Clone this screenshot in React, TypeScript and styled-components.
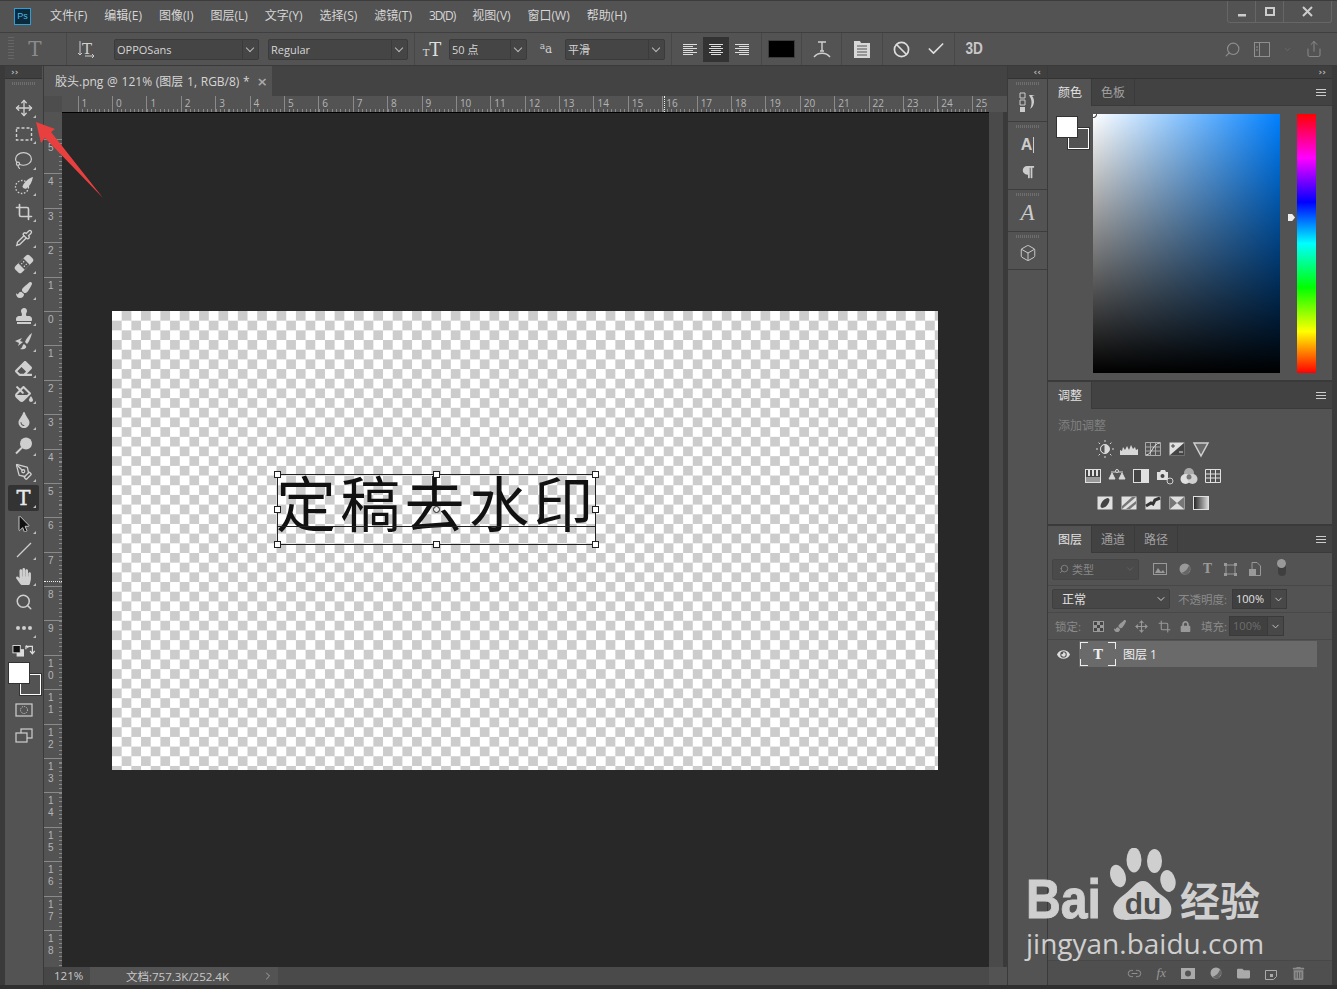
import React from "react";
import styled, { createGlobalStyle } from "styled-components";
import { Move, Lasso, Crop, Pipette, PenTool, Search, Box, Link2, Check, Ban, Share, ChevronDown, ChevronRight } from "lucide-react";
import { FaPaintBrush, FaStamp, FaEraser, FaFillDrip, FaTint, FaMousePointer, FaHandPaper, FaLock, FaEye, FaFolder, FaTrashAlt, FaParagraph } from "react-icons/fa";

const GlobalStyle = createGlobalStyle`
  html, body { margin: 0; padding: 0; background: #535353; overflow: hidden; }
  * { box-sizing: border-box; }
`;

const ICON = "#cfcfcf";
const MENU = ["文件(F)", "编辑(E)", "图像(I)", "图层(L)", "文字(Y)", "选择(S)", "滤镜(T)", "3D(D)", "视图(V)", "窗口(W)", "帮助(H)"];
const RULER_STEP = 34.4;
const TOP_LABELS = ["1", "0", ...Array.from({ length: 25 }, (_, i) => String(i + 1))];
const SIDE_LABELS = ["5", "4", "3", "2", "1", "0", "1", "2", "3", "4", "5", "6", "7", "8", "9", "10", "11", "12", "13", "14", "15", "16", "17", "18"];

const ToolGlyph = styled.span`
  font: 400 21px/1 "DejaVu Serif", serif;
  color: #e8e8e8;
  -webkit-text-stroke: 0.4px #e8e8e8;
`;

const Svg: React.FC<{ size?: number; children: React.ReactNode }> = ({ size = 20, children }) => (
  <svg width={size} height={size} viewBox="0 0 20 20" fill="none">{children}</svg>
);

const Marquee = () => <Svg><rect x="2.5" y="4" width="15" height="12" stroke={ICON} strokeWidth="1.4" strokeDasharray="3 2" /></Svg>;
const QuickSelect = () => (
  <Svg>
    <circle cx="8" cy="11" r="6.5" stroke={ICON} strokeWidth="1.3" strokeDasharray="1.6 1.6" />
    <path d="M19 1 C15 2 10 6 8.500 10.500 C9 12.500 11 13 12.500 12.500 C16 10 18 6 19 1Z" fill={ICON} />
  </Svg>
);
const Bandaid = () => (
  <Svg>
    <g transform="rotate(-45 10 10)">
      <rect x="0" y="5.500" width="20" height="9" rx="2.500" fill={ICON} />
      <rect x="6.500" y="5.500" width="7" height="9" fill="#535353" />
      <path d="M8 7.500h1.300v1.300H8zM10.700 7.500H12v1.300h-1.300zM8 11.200h1.300v1.300H8zM10.700 11.200H12v1.300h-1.300z" fill={ICON} />
    </g>
  </Svg>
);
const HistoryBrush = () => (
  <Svg>
    <path d="M18 1 C15 3 12 7 11 10 L13 12 C15 10 17 5 18 1Z" fill={ICON} />
    <path d="M10 12 C8 13 9 16 6 17 C10 18 13 16 12 14Z" fill={ICON} />
    <path d="M1 9 L8 6 L6 9 L9 10 L4 14 L5 11Z" fill={ICON} />
  </Svg>
);
const Dodge = () => (
  <Svg>
    <circle cx="12" cy="7.5" r="6" fill={ICON} />
    <path d="M8 11.5 L2 17.5" stroke={ICON} strokeWidth="2" />
  </Svg>
);
const LineTool = () => <Svg><path d="M3 17 L17 3" stroke={ICON} strokeWidth="1.2" /></Svg>;
const Dots = () => (
  <Svg>
    <circle cx="4" cy="10" r="2" fill={ICON} />
    <circle cx="10" cy="10" r="2" fill={ICON} />
    <circle cx="16" cy="10" r="2" fill={ICON} />
  </Svg>
);
const MaskMode = () => (
  <Svg>
    <rect x="2" y="4" width="16" height="12" stroke={ICON} strokeWidth="1.2" />
    <circle cx="10" cy="10" r="3.5" stroke={ICON} strokeWidth="1" strokeDasharray="1 1" />
  </Svg>
);
const ScreenMode = () => (
  <Svg>
    <rect x="7" y="3" width="11" height="9" stroke={ICON} strokeWidth="1.2" />
    <rect x="2" y="7" width="11" height="9" fill="#535353" stroke={ICON} strokeWidth="1.2" />
  </Svg>
);

const TOOLS: { key: string; icon: React.ReactNode; active?: boolean; flag?: boolean }[] = [
  { key: "move", icon: <Move size={18} color={ICON} strokeWidth={1.8} />, flag: true },
  { key: "marquee", icon: <Marquee />, flag: true },
  { key: "lasso", icon: <Lasso size={19} color={ICON} strokeWidth={1.5} />, flag: true },
  { key: "quick", icon: <QuickSelect />, flag: true },
  { key: "crop", icon: <Crop size={18} color={ICON} strokeWidth={2.2} />, flag: true },
  { key: "pipette", icon: <Pipette size={18} color={ICON} strokeWidth={1.8} />, flag: true },
  { key: "heal", icon: <Bandaid />, flag: true },
  { key: "brush", icon: <FaPaintBrush size={16} color={ICON} />, flag: true },
  { key: "stamp", icon: <FaStamp size={16} color={ICON} />, flag: true },
  { key: "history", icon: <HistoryBrush />, flag: true },
  { key: "eraser", icon: <FaEraser size={17} color={ICON} />, flag: true },
  { key: "fill", icon: <FaFillDrip size={18} color={ICON} />, flag: true },
  { key: "drop", icon: <FaTint size={16} color={ICON} />, flag: true },
  { key: "dodge", icon: <Dodge />, flag: true },
  { key: "pen", icon: <PenTool size={18} color={ICON} strokeWidth={1.7} />, flag: true },
  { key: "type", icon: <ToolGlyph>T</ToolGlyph>, flag: true, active: true },
  { key: "select", icon: <FaMousePointer size={16} color="#111" stroke={ICON} strokeWidth={30} />, flag: true },
  { key: "line", icon: <LineTool />, flag: true },
  { key: "hand", icon: <FaHandPaper size={17} color={ICON} />, flag: true },
  { key: "zoom", icon: <Search size={18} color={ICON} strokeWidth={2} /> },
  { key: "more", icon: <Dots />, flag: true },
];

const ALIGN_LINES = {
  left: [[0, 14], [0, 10], [0, 14], [0, 10], [0, 14], [0, 10]],
  center: [[0, 14], [2, 10], [0, 14], [2, 10], [0, 14], [2, 10]],
  right: [[0, 14], [4, 10], [0, 14], [4, 10], [0, 14], [4, 10]],
};

const AlignIcon: React.FC<{ kind: keyof typeof ALIGN_LINES }> = ({ kind }) => (
  <svg width="14" height="13" viewBox="0 0 14 13">
    {ALIGN_LINES[kind].map(([x, w], i) => (
      <rect key={i} x={x} y={i * 2 + 1} width={w} height="1" fill="#dedede" />
    ))}
  </svg>
);

const Adj: React.FC<{ children: React.ReactNode }> = ({ children }) => <svg width="18" height="18" viewBox="0 0 18 18">{children}</svg>;
const framed = (inner: React.ReactNode) => (
  <Adj>
    <rect x="1.5" y="2.5" width="15" height="13" fill="#e0e0e0" />
    {inner}
  </Adj>
);

const ADJUST_ROWS: React.ReactNode[][] = [
  [
    <Adj key="a"><circle cx="9" cy="9" r="4.5" fill="#d8d8d8" stroke="#d8d8d8" /><path d="M9 4.5 A4.5 4.5 0 0 0 9 13.5Z" fill="#535353" stroke="#d8d8d8" /><path d="M9 0v2M9 16v2M0 9h2M16 9h2M2.6 2.6l1.4 1.4M14 14l1.4 1.4M2.6 15.4L4 14M14 4l1.4-1.4" stroke="#d8d8d8" /></Adj>,
    <Adj key="b"><path d="M0 15 V10 L2 11 L3 7 L5 10 L7 6 L9 10 L11 5 L13 9 L15 7 L16 10 L18 9 V15Z" fill="#d8d8d8" /></Adj>,
    <Adj key="c"><path d="M1.5 2.5h15v13h-15zM6.5 2.5v13M11.5 2.5v13M1.5 7h15M1.5 11h15" fill="none" stroke="#aaa" /><path d="M2 15 C8 15 9 3 16 3" stroke="#e0e0e0" fill="none" /></Adj>,
    <Adj key="d"><rect x="1.5" y="2.5" width="15" height="13" fill="#e0e0e0" /><path d="M1.5 15.5 L16.5 2.5 V15.5Z" fill="#444" /><path d="M3 6h4M5 4v4" stroke="#444" /><path d="M11 12h4" stroke="#e0e0e0" /></Adj>,
    <Adj key="e"><path d="M2 3 H16 L9 16Z" fill="#6a6a6a" stroke="#d0d0d0" strokeWidth="1.5" /></Adj>,
  ],
  [
    <Adj key="a"><rect x="1.5" y="2.5" width="15" height="13" fill="#444" stroke="#e0e0e0" /><path d="M5 3v6M9 3v6M13 3v6" stroke="#e0e0e0" strokeWidth="2" /><rect x="2" y="10" width="14" height="5" fill="#999" /></Adj>,
    <Adj key="b"><path d="M9 2v3M3 5h12M1 12 L4 6 L7 12ZM11 12 L14 6 L17 12Z" fill="#d8d8d8" stroke="#d8d8d8" /><circle cx="9" cy="4" r="1.5" fill="#535353" stroke="#d8d8d8" /></Adj>,
    <Adj key="c"><rect x="1.5" y="2.5" width="15" height="13" fill="#e0e0e0" stroke="#e0e0e0" /><rect x="2" y="3" width="7" height="12" fill="#444" /></Adj>,
    <Adj key="d"><path d="M1 5h3l1-2h4l1 2h2v8H1Z" fill="#e0e0e0" /><circle cx="6.5" cy="9" r="2" fill="#444" /><circle cx="14" cy="14" r="3" fill="#535353" stroke="#d0d0d0" /></Adj>,
    <Adj key="e"><circle cx="9" cy="6" r="5" fill="#aaa" /><circle cx="5.5" cy="12" r="5" fill="#e0e0e0" /><circle cx="12.5" cy="12" r="5" fill="#d0d0d0" /><circle cx="9" cy="10" r="2.5" fill="#777" /></Adj>,
    <Adj key="f"><path d="M1.5 2.5h15v13h-15zM6.5 2.5v13M11.5 2.5v13M1.5 7h15M1.5 11h15" fill="none" stroke="#e0e0e0" /></Adj>,
  ],
  [
    framed(<ellipse cx="9" cy="9" rx="3" ry="6" fill="#444" transform="rotate(40 9 9)" />),
    framed(<path d="M2 12 L12 3 H16 L2 15ZM6 15 L16 7 V10 L10 15Z" fill="#777" />),
    framed(<path d="M2 12 L7 9 L9 10 L11 6 L16 4" fill="none" stroke="#333" strokeWidth="3" />),
    framed(<path d="M2 3 L9 9 L16 3 V15 L9 9 L2 15Z" fill="#777" />),
    <Adj key="g"><defs><linearGradient id="gm"><stop offset="0" stopColor="#222" /><stop offset="1" stopColor="#ddd" /></linearGradient></defs><rect x="1.5" y="2.5" width="15" height="13" fill="url(#gm)" stroke="#e0e0e0" /></Adj>,
  ],
];

const App: React.FC = () => (
  <Window>
    <GlobalStyle />
    <MenuBar>
      <PsLogo>Ps</PsLogo>
      <MenuList>
        {MENU.map((m) => <MenuItem key={m} $tight={m === "3D(D)"}>{m}</MenuItem>)}
      </MenuList>
      <WindowControls>
        <WinButton><svg width="10" height="10"><rect x="1" y="7" width="8" height="2.5" fill="#ccc" /></svg></WinButton>
        <WinButton><svg width="10" height="10"><rect x="1" y="1" width="8" height="7" fill="none" stroke="#ccc" strokeWidth="2" /></svg></WinButton>
        <WinButton $wide><svg width="11" height="11"><path d="M1 1 L10 10 M10 1 L1 10" stroke="#ccc" strokeWidth="2" /></svg></WinButton>
      </WindowControls>
    </MenuBar>

    <OptionsBar>
      <Grip />
      <Slot $w={48}><GhostT>T</GhostT></Slot>
      <Sep />
      <Slot $w={43}>
        <OrientLabel>T<svg width="18" height="18" viewBox="0 0 18 18"><path d="M3 1v14M1 13l2 2 2-2M8 16h9M15 14l2 2-2 2" stroke="#ccc" fill="none" /></svg></OrientLabel>
      </Slot>
      <Select $w={145} $ml={4}>OPPOSans</Select>
      <Select $w={140} $ml={9}>Regular</Select>
      <Sep $ml={6} />
      <Slot $w={34}><SizeGlyph><small>T</small>T</SizeGlyph></Slot>
      <Select $w={78}>50 点</Select>
      <Slot $w={38}><AaGlyph><sup>a</sup>a</AaGlyph></Slot>
      <Select $w={100}>平滑</Select>
      <Sep $ml={6} />
      <Slot $w={26} $ml={5}><AlignIcon kind="left" /></Slot>
      <Slot $w={26} $active><AlignIcon kind="center" /></Slot>
      <Slot $w={26}><AlignIcon kind="right" /></Slot>
      <Sep $ml={6} />
      <Swatch />
      <Sep />
      <Slot $w={39}>
        <svg width="18" height="20" viewBox="0 0 18 20"><path d="M5 3h8M9 3v9M7 12h4M1 18 C5 13 13 13 17 18" stroke="#d0d0d0" strokeWidth="1.4" fill="none" /></svg>
      </Slot>
      <Sep />
      <Slot $w={40}>
        <svg width="16" height="18" viewBox="0 0 16 18"><path d="M0 1h6l1 2h9v15H0Z" fill="#d8d8d8" /><path d="M3 6h10M3 9h10M3 12h10M3 15h10" stroke="#535353" /></svg>
      </Slot>
      <Sep />
      <Slot $w={37}><Ban size={17} color="#ddd" strokeWidth={2.4} /></Slot>
      <Slot $w={32}><Check size={20} color="#ddd" strokeWidth={2} /></Slot>
      <Sep $ml={2} />
      <Slot $w={39}><ThreeD>3D</ThreeD></Slot>
      <OptionsRight>
        <Search size={17} color="#8f8f8f" strokeWidth={1.6} style={{ transform: "scaleX(-1)" }} />
        <svg width="16" height="15" viewBox="0 0 16 15"><rect x=".5" y=".5" width="15" height="14" fill="none" stroke="#8f8f8f" /><path d="M5.5 1v13M2 5h2M2 8h2" stroke="#8f8f8f" /></svg>
        <ChevronDown size={9} color="#6f6f6f" />
        <Share size={18} color="#8f8f8f" strokeWidth={1.2} />
      </OptionsRight>
    </OptionsBar>

    <Workspace>
      <ToolColumn>
        <CollapseStrip $align="flex-start">››</CollapseStrip>
        <DockGrip />
        <ToolList>
          {TOOLS.map((t) => (
            <ToolButton key={t.key} $active={t.active} $flag={t.flag}>{t.icon}</ToolButton>
          ))}
        </ToolList>
        <MiniColors>
          <svg width="14" height="14" viewBox="0 0 14 14"><rect x="5" y="5" width="8" height="8" fill="#ddd" /><rect x="1" y="1" width="8" height="8" fill="#111" stroke="#ddd" /></svg>
          <svg width="12" height="14" viewBox="0 0 12 14"><path d="M1 5 V2 H8 V9M5.5 7l2.5 3 2.5-3M3.500 3.500L1 1" stroke="#ddd" fill="none" strokeWidth="1.3" /></svg>
        </MiniColors>
        <ColorChips $small />
        <BottomTool><MaskMode /></BottomTool>
        <BottomTool><ScreenMode /></BottomTool>
      </ToolColumn>

      <DocColumn>
        <TabStrip>
          <DocTab>胶头.png @ 121% (图层 1, RGB/8) *<TabClose>×</TabClose></DocTab>
        </TabStrip>
        <TopRulerRow>
          <RulerCorner />
          <TopRuler>
            {TOP_LABELS.map((l, i) => <TopTick key={i}>{l}</TopTick>)}
            <TopCursor />
          </TopRuler>
          <RulerGap />
        </TopRulerRow>
        <MiddleRow>
          <SideRuler>
            {SIDE_LABELS.map((l, i) => (
              <SideTick key={i}>{l.split("").map((d, j) => <span key={j}>{d}</span>)}</SideTick>
            ))}
            <SideCursor />
          </SideRuler>
          <Stage>
            <DocCanvas>
              <TextLayer>定稿去水印</TextLayer>
              <TransformBox>
                <Baseline />
                {["tl", "tc", "tr", "ml", "mr", "bl", "bc", "br"].map((h) => <Handle key={h} $pos={h} />)}
                <CenterMark />
              </TransformBox>
            </DocCanvas>
          </Stage>
          <VScroll />
        </MiddleRow>
        <StatusBar>
          <ZoomBox>121%</ZoomBox>
          <DocInfo>文档:757.3K/252.4K</DocInfo>
          <ChevronRight size={12} color="#bbb" strokeWidth={1.5} />
          <HScroll />
        </StatusBar>
      </DocColumn>

      <DockColumn>
        <CollapseStrip $align="flex-end">‹‹</CollapseStrip>
        <DockGroup $h={43}>
          <svg width="18" height="20" viewBox="0 0 18 20"><path d="M1 1h5v5H1zM1 8h5v5H1z" stroke="#ccc" fill="none" /><rect x="1" y="15" width="5" height="5" fill="#ccc" /><path d="M10 3h6l-3 1c3 3 3 10-2 13 2-4 2-9 0-12Z" fill="#ccc" /></svg>
        </DockGroup>
        <DockGroup $h={68}>
          <DockLetter>A<i /></DockLetter>
          <FaParagraph size={14} color="#ccc" />
        </DockGroup>
        <DockGroup $h={42}><ScriptA>A</ScriptA></DockGroup>
        <DockGroup $h={38}><Box size={18} color="#ccc" strokeWidth={1.3} /></DockGroup>
      </DockColumn>

      <PanelColumn>
        <CollapseStrip $align="flex-end">››</CollapseStrip>
        <Panel $h={301}>
          <PanelHeader>
            <PanelTab $active>颜色</PanelTab>
            <PanelTab>色板</PanelTab>
            <PanelMenu />
          </PanelHeader>
          <ColorBody>
            <ColorChips />
            <Picker><PickerDot /></Picker>
            <HueArrow />
            <HueBar />
          </ColorBody>
        </Panel>
        <Panel $h={142}>
          <PanelHeader>
            <PanelTab $active>调整</PanelTab>
            <PanelMenu />
          </PanelHeader>
          <AdjustBody>
            <AdjustTitle>添加调整</AdjustTitle>
            {ADJUST_ROWS.map((row, i) => (
              <AdjustRow key={i}>
                {row.map((icon, j) => <AdjustCell key={j}>{icon}</AdjustCell>)}
              </AdjustRow>
            ))}
          </AdjustBody>
        </Panel>
        <Panel $grow>
          <PanelHeader>
            <PanelTab $active>图层</PanelTab>
            <PanelTab>通道</PanelTab>
            <PanelTab>路径</PanelTab>
            <PanelMenu />
          </PanelHeader>
          <LayerRow $h={33}>
            <FilterSelect><Search size={10} color="#888" style={{ transform: "scaleX(-1)" }} />类型<ChevronDown size={10} color="#666" /></FilterSelect>
            <FilterIcons>
              <svg width="14" height="12" viewBox="0 0 14 12"><rect x=".5" y=".5" width="13" height="11" fill="none" stroke="#999" /><path d="M2 10 L5 5 L8 9 L10 7 L12 10Z" fill="#999" /></svg>
              <svg width="12" height="12" viewBox="0 0 12 12"><circle cx="6" cy="6" r="5.500" fill="#999" /><path d="M2 10 C6 9 9 6 10 2 L12 6 L8 12Z" fill="#666" /></svg>
              <FilterT>T</FilterT>
              <svg width="13" height="13" viewBox="0 0 13 13"><rect x="2" y="2" width="9" height="9" fill="none" stroke="#999" /><path d="M0 0h3v3H0zM10 0h3v3h-3zM0 10h3v3H0zM10 10h3v3h-3z" fill="#999" /></svg>
              <svg width="12" height="14" viewBox="0 0 12 14"><path d="M3 .5h5l3.500 3.500v9.500H3Z" fill="none" stroke="#999" /><rect x="0" y="7" width="7" height="7" fill="#999" /></svg>
              <FilterToggle><span /></FilterToggle>
            </FilterIcons>
          </LayerRow>
          <LayerRow $h={27}>
            <BlendSelect>正常<ChevronDown size={12} color="#ccc" /></BlendSelect>
            <DimLabel $ml={8}>不透明度:</DimLabel>
            <ValueBox $ml={5}>100%</ValueBox>
            <ArrowBox><ChevronDown size={11} color="#ccc" /></ArrowBox>
          </LayerRow>
          <LayerRow $h={27}>
            <DimLabel $ml={3}>锁定:</DimLabel>
            <LockIcons>
              <svg width="11" height="11" viewBox="0 0 11 11"><rect width="11" height="11" fill="#999" /><path d="M1 1h3v3H1zM7 1h3v3H7zM4 4h3v3H4zM1 7h3v3H1zM7 7h3v3H7z" fill="#444" /></svg>
              <FaPaintBrush size={12} color="#999" />
              <Move size={13} color="#999" />
              <Crop size={13} color="#999" />
              <FaLock size={11} color="#999" />
            </LockIcons>
            <DimLabel $ml={8}>填充:</DimLabel>
            <ValueBox $ml={2} $dim>100%</ValueBox>
            <ArrowBox><ChevronDown size={11} color="#ccc" /></ArrowBox>
          </LayerRow>
          <LayerList>
            <EyeCell><FaEye size={13} color="#ddd" /></EyeCell>
            <LayerItem>
              <LayerThumb>T</LayerThumb>
              <LayerName>图层 1</LayerName>
            </LayerItem>
          </LayerList>
          <PanelFooter>
            <Link2 size={15} color="#999" strokeWidth={1.4} />
            <FxLabel>fx</FxLabel>
            <svg width="14" height="11" viewBox="0 0 14 11"><rect width="14" height="11" fill="#aaa" /><circle cx="7" cy="5.500" r="3" fill="#555" /></svg>
            <svg width="12" height="12" viewBox="0 0 12 12"><circle cx="6" cy="6" r="5.500" fill="#aaa" /><path d="M2 10 C6 9 9 6 10 2 L12 6 L8 12Z" fill="#666" /></svg>
            <FaFolder size={13} color="#aaa" />
            <svg width="12" height="13" viewBox="0 0 12 13"><path d="M.5 3.500h8l3 3v6H.5Z" fill="none" stroke="#aaa" transform="matrix(1 0 0 -1 0 16)" /><rect x="5" y="7" width="3" height="3" fill="#aaa" /></svg>
            <FaTrashAlt size={13} color="#8a8a8a" />
          </PanelFooter>
        </Panel>
      </PanelColumn>
    </Workspace>
    <BottomEdge />

    <ArrowMark viewBox="0 0 80 90" width="80" height="90">
      <polygon points="1,2 20,9 16,12 68,78 10,18 6,23" fill="#e8403f" />
    </ArrowMark>

    <Watermark>
      <BaiText>Bai</BaiText>
      <PawMark viewBox="0 0 66 76" width="66" height="76">
        <ellipse cx="24" cy="12" rx="7.500" ry="12.500" fill="#cfcfcf" />
        <ellipse cx="44.500" cy="13" rx="7.500" ry="12" fill="#cfcfcf" />
        <ellipse cx="8" cy="28" rx="7.500" ry="11.500" fill="#cfcfcf" transform="rotate(-18 8 28)" />
        <ellipse cx="58" cy="33" rx="7.500" ry="11" fill="#cfcfcf" transform="rotate(-12 58 33)" />
        <path d="M33 33 C40 33 43 41 50 46 C58 51 63 57 61 65 C59 74 46 71 33 71 C20 71 8 75 4 66 C1 58 8 51 15 46 C22 41 26 33 33 33Z" fill="#cfcfcf" />
        <text x="33" y="66" textAnchor="middle" fontFamily="Liberation Sans" fontWeight="700" fontSize="30" fill="#4d4d4d">du</text>
      </PawMark>
      <JingText>经验</JingText>
      <DomainText>jingyan.baidu.com</DomainText>
    </Watermark>
  </Window>
);

const Window = styled.div`
  position: relative;
  width: 1337px;
  height: 989px;
  overflow: hidden;
  display: flex;
  flex-direction: column;
  background: #535353;
  color: #d0d0d0;
  font-family: "Open Sans", "Noto Sans CJK SC", sans-serif;
  font-size: 12px;
`;

const MenuBar = styled.div`
  height: 33px;
  flex: none;
  display: flex;
  align-items: flex-start;
  padding-left: 14px;
  background: #535353;
  border-top: 1px solid #3c3c3c;
  border-bottom: 1px solid #3f3f3f;
`;

const PsLogo = styled.div`
  width: 17px;
  height: 17px;
  margin-top: 7px;
  background: #0b2a3c;
  border: 1px solid #2d9fd8;
  color: #4db8ee;
  font: 9px/15px "Liberation Sans", sans-serif;
  text-align: center;
`;

const MenuList = styled.div`
  display: flex;
  gap: 17px;
  margin-left: 19px;
  padding-top: 6px;
`;

const MenuItem = styled.span<{ $tight?: boolean }>`
  font-size: 12px;
  line-height: 18px;
  color: #d6d6d6;
  white-space: nowrap;
  letter-spacing: ${(p) => (p.$tight ? "-1px" : "0")};
`;

const WindowControls = styled.div`
  margin-left: auto;
  margin-right: 5px;
  display: flex;
  height: 22px;
  border: 1px solid #666;
  border-top: 0;
  border-radius: 0 0 3px 3px;
`;

const WinButton = styled.div<{ $wide?: boolean }>`
  width: ${(p) => (p.$wide ? 47 : 28)}px;
  display: flex;
  align-items: center;
  justify-content: center;
  border-right: 1px solid ${(p) => (p.$wide ? "transparent" : "#666")};
`;

const OptionsBar = styled.div`
  height: 33px;
  flex: none;
  display: flex;
  align-items: center;
  padding-left: 8px;
  background: #535353;
  border-bottom: 1px solid #3a3a3a;
`;

const Grip = styled.div`
  width: 10px;
  height: 24px;
  background: repeating-linear-gradient(to bottom, #666 0 1px, transparent 1px 3px);
  background-size: 6px 100%;
  background-repeat: no-repeat;
`;

const Slot = styled.div<{ $w: number; $ml?: number; $active?: boolean }>`
  width: ${(p) => p.$w}px;
  height: 25px;
  flex: none;
  margin-left: ${(p) => p.$ml ?? 0}px;
  display: flex;
  align-items: center;
  justify-content: center;
  background: ${(p) => (p.$active ? "#333" : "transparent")};
`;

const Sep = styled.div<{ $ml?: number }>`
  width: 1px;
  height: 32px;
  flex: none;
  margin-left: ${(p) => p.$ml ?? 0}px;
  background: #474747;
`;

const GhostT = styled.span`
  font: 400 20px "DejaVu Serif", serif;
  color: #8b8b8b;
  margin-right: 14px;
`;

const OrientLabel = styled.span`
  display: flex;
  align-items: center;
  font: 400 15px "DejaVu Serif", serif;
  color: #d0d0d0;
  svg { margin-left: -15px; }
`;

const Select = styled.div<{ $w: number; $ml?: number }>`
  position: relative;
  width: ${(p) => p.$w}px;
  height: 21px;
  flex: none;
  margin-left: ${(p) => p.$ml ?? 0}px;
  padding-left: 2px;
  background: #454545;
  border: 1px solid #3b3b3b;
  border-radius: 2px;
  font-size: 11px;
  line-height: 19px;
  color: #d6d6d6;
  &::before {
    content: "";
    position: absolute;
    top: 0;
    bottom: 0;
    right: 15px;
    width: 1px;
    background: #3b3b3b;
  }
  &::after {
    content: "";
    position: absolute;
    right: 5px;
    top: 5px;
    width: 5px;
    height: 5px;
    border-right: 1px solid #bbb;
    border-bottom: 1px solid #bbb;
    transform: rotate(45deg);
  }
`;

const SizeGlyph = styled.span`
  font: 400 18px "DejaVu Serif", serif;
  color: #dedede;
  small { font-size: 10px; }
`;

const AaGlyph = styled.span`
  font: 12px "DejaVu Serif", serif;
  color: #cfcfcf;
  sup { font-size: 9px; vertical-align: 4px; line-height: 0; }
`;

const Swatch = styled.div`
  width: 27px;
  height: 18px;
  flex: none;
  margin: 0 6px 0 6px;
  background: #000;
  border: 1px solid #3c3c3c;
`;

const ThreeD = styled.span`
  font: 700 16px "Liberation Sans", sans-serif;
  color: #c8c8c8;
  transform: scaleX(0.85);
`;

const OptionsRight = styled.div`
  margin-left: auto;
  margin-right: 14px;
  display: flex;
  align-items: center;
  gap: 13px;
`;

const Workspace = styled.div`
  flex: 1;
  min-height: 0;
  display: flex;
  padding-left: 4px;
  background: #3a3a3a;
`;

const ToolColumn = styled.div`
  width: 40px;
  flex: none;
  display: flex;
  flex-direction: column;
  align-items: center;
  padding-right: 1px;
  background: #535353;
  border-left: 1px solid #3a3a3a;
  border-right: 1px solid #3a3a3a;
`;

const CollapseStrip = styled.div<{ $align: string }>`
  width: 100%;
  height: 13px;
  flex: none;
  display: flex;
  justify-content: ${(p) => p.$align};
  align-items: center;
  padding: 0 6px;
  background: #3f3f3f;
  border-bottom: 1px solid #333;
  color: #b5b5b5;
  font: 700 9px/10px "DejaVu Sans", sans-serif;
`;

const DockGrip = styled.div`
  width: 24px;
  height: 3px;
  flex: none;
  margin: 3px 0 0;
  background: repeating-linear-gradient(to right, #6e6e6e 0 1px, transparent 1px 2px);
`;

const ToolList = styled.div`
  display: flex;
  flex-direction: column;
  align-items: center;
  margin-top: 10px;
`;

const ToolButton = styled.div<{ $active?: boolean; $flag?: boolean }>`
  position: relative;
  width: 31px;
  height: 26px;
  display: flex;
  align-items: center;
  justify-content: center;
  background: ${(p) => (p.$active ? "#333" : "transparent")};
  border-radius: 2px;
  &::after {
    content: "";
    display: ${(p) => (p.$flag ? "block" : "none")};
    position: absolute;
    right: 3px;
    bottom: 3px;
    border-left: 3px solid transparent;
    border-bottom: 3px solid #bdbdbd;
  }
`;

const MiniColors = styled.div`
  width: 100%;
  display: flex;
  justify-content: space-between;
  padding: 0 6px 0 7px;
  margin-top: 3px;
`;

const ColorChips = styled.div<{ $small?: boolean }>`
  position: relative;
  flex: none;
  width: 30px;
  height: 30px;
  margin: ${(p) => (p.$small ? "5px 0 4px 0" : "3px 0 0 0")};
  &::before {
    content: "";
    position: absolute;
    left: 11px;
    top: 11px;
    width: 19px;
    height: 19px;
    border: 1.5px solid #fff;
    outline: 1px solid #333;
    background: #535353;
  }
  &::after {
    content: "";
    position: absolute;
    left: 0;
    top: 0;
    width: 20px;
    height: 20px;
    background: #fff;
    outline: 1px solid #333;
  }
`;

const BottomTool = styled.div`
  height: 26px;
  display: flex;
  align-items: center;
  justify-content: center;
`;

const DocColumn = styled.div`
  width: 964px;
  flex: none;
  display: flex;
  flex-direction: column;
  background: #535353;
  border-right: 1px solid #3a3a3a;
`;

const TabStrip = styled.div`
  height: 30px;
  flex: none;
  display: flex;
  background: #434343;
`;

const DocTab = styled.div`
  width: 228px;
  display: flex;
  align-items: center;
  padding-left: 11px;
  background: #535353;
  font-size: 12px;
  word-spacing: 0.6px;
  color: #d6d6d6;
  white-space: nowrap;
`;

const TabClose = styled.span`
  margin-left: 7px;
  font: 700 13px "DejaVu Sans", sans-serif;
  color: #aaa;
`;

const TopRulerRow = styled.div`
  height: 16px;
  flex: none;
  display: flex;
`;

const RulerCorner = styled.div`
  width: 18px;
  flex: none;
  background: #4d4d4d;
`;

const TopRuler = styled.div`
  position: relative;
  flex: 1;
  min-width: 0;
  display: flex;
  overflow: hidden;
  padding-left: 15.6px;
  background-color: #535353;
  background-image: repeating-linear-gradient(to right, #888 0 1px, transparent 1px ${RULER_STEP / 8}px);
  background-position: 15.6px 100%;
  background-size: 100% 3px;
  background-repeat: no-repeat;
`;

const TopTick = styled.div`
  width: ${RULER_STEP}px;
  flex: none;
  border-left: 1px solid #8a8a8a;
  padding-left: 3px;
  font: 10px/15px "Open Sans", sans-serif;
  color: #b5b5b5;
`;

const TopCursor = styled.div`
  position: absolute;
  left: 602px;
  top: 0;
  bottom: 0;
  border-left: 1px dotted #eee;
`;

const RulerGap = styled.div`
  width: 18px;
  flex: none;
`;

const MiddleRow = styled.div`
  flex: 1;
  min-height: 0;
  display: flex;
`;

const SideRuler = styled.div`
  position: relative;
  width: 18px;
  flex: none;
  padding-top: 27px;
  overflow: hidden;
  background-color: #535353;
  background-image: repeating-linear-gradient(to bottom, #888 0 1px, transparent 1px ${RULER_STEP / 8}px);
  background-position: 100% 27px;
  background-size: 3px 100%;
  background-repeat: no-repeat;
`;

const SideTick = styled.div`
  height: ${RULER_STEP}px;
  display: flex;
  flex-direction: column;
  border-top: 1px solid #8a8a8a;
  padding: 2px 0 0 4px;
  font: 10px/12px "Liberation Sans", sans-serif;
  color: #b5b5b5;
  span { display: block; }
`;

const SideCursor = styled.div`
  position: absolute;
  left: 0;
  right: 0;
  top: 469px;
  border-top: 1px dotted #eee;
`;

const Stage = styled.div`
  flex: 1;
  min-width: 0;
  padding: 198px 0 0 50px;
  background: #282828;
  border-top: 1px solid #000;
  overflow: hidden;
`;

const DocCanvas = styled.div`
  position: relative;
  width: 826px;
  height: 459px;
  background-color: #fff;
  background-image: conic-gradient(#ccc 25%, #fff 0 50%, #ccc 0 75%, #fff 0);
  background-size: 19.36px 19.36px;
`;

const TextLayer = styled.div`
  position: absolute;
  left: 164px;
  top: 155px;
  font: 400 60px/70px "Noto Sans CJK SC", sans-serif;
  letter-spacing: 4.3px;
  color: #111;
  white-space: nowrap;
`;

const TransformBox = styled.div`
  position: absolute;
  left: 165px;
  top: 163px;
  width: 319px;
  height: 71px;
  border: 1px solid #222;
`;

const Baseline = styled.div`
  position: absolute;
  left: 0;
  right: 0;
  top: 51px;
  border-top: 1px solid #222;
`;

const HANDLE_POS: Record<string, string> = {
  tl: "left: -4px; top: -4px;",
  tc: "left: 155px; top: -4px;",
  tr: "right: -4px; top: -4px;",
  ml: "left: -4px; top: 31px;",
  mr: "right: -4px; top: 31px;",
  bl: "left: -4px; bottom: -4px;",
  bc: "left: 155px; bottom: -4px;",
  br: "right: -4px; bottom: -4px;",
};

const Handle = styled.div<{ $pos: string }>`
  position: absolute;
  ${(p) => HANDLE_POS[p.$pos]}
  width: 7px;
  height: 7px;
  background: #fff;
  border: 1px solid #222;
`;

const CenterMark = styled.div`
  position: absolute;
  left: 155px;
  top: 31px;
  width: 7px;
  height: 7px;
  border-radius: 50%;
  border: 1px solid #222;
  background: #eee;
`;

const VScroll = styled.div`
  width: 18px;
  flex: none;
  background: linear-gradient(to right, #4a4a4a 0 14px, #3a3a3a 14px);
`;

const StatusBar = styled.div`
  height: 18px;
  flex: none;
  display: flex;
  align-items: center;
  background: #535353;
  font-size: 11.500px;
  color: #c9c9c9;
`;

const ZoomBox = styled.div`
  width: 46px;
  height: 100%;
  padding-left: 10px;
  line-height: 18px;
  background: #474747;
`;

const DocInfo = styled.div`
  width: 172px;
  padding-left: 36px;
  white-space: nowrap;
  flex: none;
`;

const HScroll = styled.div`
  flex: 1;
  height: 100%;
  margin-left: 4px;
  margin-right: 18px;
  background: #4a4a4a;
`;

const DockColumn = styled.div`
  width: 40px;
  flex: none;
  display: flex;
  flex-direction: column;
  background: #535353;
  border-right: 1px solid #3a3a3a;
`;

const DockGroup = styled.div<{ $h: number }>`
  position: relative;
  height: ${(p) => p.$h}px;
  flex: none;
  display: flex;
  flex-direction: column;
  align-items: center;
  justify-content: center;
  gap: 12px;
  padding-top: 4px;
  border-bottom: 1px solid #3d3d3d;
  &::before {
    content: "";
    position: absolute;
    top: 3px;
    left: 8px;
    right: 8px;
    height: 3px;
    background: repeating-linear-gradient(to right, #6e6e6e 0 1px, transparent 1px 2px);
  }
`;

const DockLetter = styled.span`
  font: 700 16px/16px "Liberation Sans", sans-serif;
  color: #ccc;
  i {
    display: inline-block;
    width: 1px;
    height: 16px;
    margin-left: 1px;
    background: #ccc;
    vertical-align: top;
  }
`;

const ScriptA = styled.span`
  font: italic 400 23px/22px "Liberation Serif", serif;
  color: #ccc;
`;

const PanelColumn = styled.div`
  flex: 1;
  min-width: 0;
  display: flex;
  flex-direction: column;
  padding-right: 5px;
  background: #3a3a3a;
`;

const Panel = styled.div<{ $h?: number; $grow?: boolean }>`
  ${(p) => (p.$h ? `height: ${p.$h}px;` : "")}
  ${(p) => (p.$grow ? "flex: 1; min-height: 0;" : "flex: none;")}
  display: flex;
  flex-direction: column;
  margin-bottom: 2px;
  background: #535353;
  &:last-child { margin-bottom: 0; }
`;

const PanelHeader = styled.div`
  position: relative;
  height: 27px;
  flex: none;
  display: flex;
  background: #424242;
  border-bottom: 1px solid #3a3a3a;
`;

const PanelTab = styled.div<{ $active?: boolean }>`
  width: ${(p) => (p.$active ? 44 : 43)}px;
  padding-left: ${(p) => (p.$active ? 10 : 9)}px;
  font-size: 12px;
  line-height: 27px;
  height: 27px;
  color: ${(p) => (p.$active ? "#e2e2e2" : "#a0a0a0")};
  background: ${(p) => (p.$active ? "#535353" : "transparent")};
  border-right: 1px solid #3a3a3a;
`;

const PanelMenu = styled.div`
  margin: 10px 6px 0 auto;
  width: 10px;
  height: 7px;
  border-top: 1px solid #ccc;
  border-bottom: 1px solid #ccc;
  background: linear-gradient(#ccc, #ccc) center / 100% 1px no-repeat;
`;

const ColorBody = styled.div`
  flex: 1;
  display: flex;
  align-items: flex-start;
  padding: 8px 0 0 9px;
`;

const Picker = styled.div`
  position: relative;
  width: 187px;
  height: 259px;
  margin-left: 6px;
  background: linear-gradient(to top, #000, transparent), linear-gradient(to right, #fff, #0080ff);
`;

const PickerDot = styled.div`
  position: absolute;
  left: -3px;
  top: -3px;
  width: 7px;
  height: 7px;
  border: 1px solid #111;
  border-radius: 50%;
  clip-path: inset(3px 0 0 3px);
`;

const HueArrow = styled.div`
  width: 7px;
  height: 7px;
  margin: 100px 0 0 8px;
  background: #eee;
  clip-path: polygon(0 0, 60% 0, 100% 50%, 60% 100%, 0 100%);
`;

const HueBar = styled.div`
  width: 19px;
  height: 259px;
  margin-left: 2px;
  background: linear-gradient(to bottom, #f00, #f0f 17%, #00f 34%, #0ff 50%, #0f0 67%, #ff0 84%, #f00);
`;

const AdjustBody = styled.div`
  flex: 1;
  display: flex;
  flex-direction: column;
  padding: 8px 0 0 33px;
`;

const AdjustTitle = styled.div`
  margin: 0 0 0 -23px;
  font-size: 12px;
  line-height: 18px;
  color: #808080;
`;

const AdjustRow = styled.div`
  width: 144px;
  height: 27px;
  display: flex;
  justify-content: center;
  align-items: center;
`;

const AdjustCell = styled.div`
  width: 24px;
  display: flex;
  justify-content: center;
`;

const LayerRow = styled.div<{ $h: number }>`
  height: ${(p) => p.$h}px;
  flex: none;
  display: flex;
  align-items: center;
  padding-left: 4px;
  border-bottom: 1px solid #484848;
`;

const FilterSelect = styled.div`
  width: 87px;
  height: 21px;
  display: flex;
  align-items: center;
  gap: 3px;
  padding: 0 3px 0 6px;
  background: #4a4a4a;
  border: 1px solid #454545;
  border-radius: 2px;
  font-size: 11px;
  color: #888;
  svg:last-child { margin-left: auto; }
`;

const FilterIcons = styled.div`
  display: flex;
  align-items: center;
  gap: 12px;
  margin-left: 14px;
`;

const FilterT = styled.span`
  font: 700 12px "DejaVu Serif", serif;
  color: #999;
`;

const FilterToggle = styled.div`
  width: 8px;
  height: 17px;
  margin-left: 5px;
  margin-top: -3px;
  background: #3f3f3f;
  border-radius: 4px;
  span {
    display: block;
    width: 9px;
    height: 9px;
    margin-left: -.5px;
    border-radius: 50%;
    background: #999;
  }
`;

const BlendSelect = styled.div`
  width: 118px;
  height: 20px;
  display: flex;
  align-items: center;
  justify-content: space-between;
  padding: 0 2px 0 9px;
  background: #474747;
  border: 1px solid #3f3f3f;
  border-radius: 2px;
  font-size: 12px;
  color: #e0e0e0;
`;

const DimLabel = styled.span<{ $ml: number }>`
  margin-left: ${(p) => p.$ml}px;
  font-size: 11.500px;
  color: #8a8a8a;
  white-space: nowrap;
  flex: none;
`;

const ValueBox = styled.div<{ $dim?: boolean; $ml: number }>`
  width: 39px;
  height: 20px;
  margin-left: ${(p) => p.$ml}px;
  padding-left: 3px;
  background: #404040;
  border: 1px solid #3a3a3a;
  font-size: 11px;
  line-height: 18px;
  color: ${(p) => (p.$dim ? "#6e6e6e" : "#e4e4e4")};
`;

const ArrowBox = styled.div`
  width: 16px;
  height: 20px;
  display: flex;
  align-items: center;
  justify-content: center;
  border: 1px solid #3a3a3a;
  border-left: 0;
  background: #484848;
`;

const LockIcons = styled.div`
  width: 108px;
  flex: none;
  margin-left: 4px;
  display: flex;
  align-items: center;
  justify-content: space-between;
  padding: 0 2px 0 8px;
`;

const LayerList = styled.div`
  flex: 1;
  min-height: 0;
  display: flex;
  align-items: flex-start;
  padding-top: 1px;
`;

const EyeCell = styled.div`
  width: 31px;
  height: 26px;
  flex: none;
  display: flex;
  align-items: center;
  justify-content: center;
`;

const LayerItem = styled.div`
  width: 238px;
  height: 26px;
  display: flex;
  align-items: center;
  background: #6a6a6a;
`;

const LayerThumb = styled.div`
  width: 36px;
  height: 24px;
  flex: none;
  margin-left: 1px;
  display: flex;
  align-items: center;
  justify-content: center;
  font: 700 13px "DejaVu Serif", serif;
  color: #eee;
  background:
    linear-gradient(#eee, #eee) 0 0 / 8px 1px no-repeat,
    linear-gradient(#eee, #eee) 100% 0 / 8px 1px no-repeat,
    linear-gradient(#eee, #eee) 0 100% / 8px 1px no-repeat,
    linear-gradient(#eee, #eee) 100% 100% / 8px 1px no-repeat,
    linear-gradient(#eee, #eee) 0 0 / 1px 7px no-repeat,
    linear-gradient(#eee, #eee) 100% 0 / 1px 7px no-repeat,
    linear-gradient(#eee, #eee) 0 100% / 1px 7px no-repeat,
    linear-gradient(#eee, #eee) 100% 100% / 1px 7px no-repeat;
`;

const LayerName = styled.span`
  margin-left: 7px;
  font-size: 12px;
  color: #eee;
`;

const PanelFooter = styled.div`
  height: 25px;
  flex: none;
  display: flex;
  align-items: center;
  justify-content: flex-end;
  gap: 15px;
  padding-right: 27px;
  background: #4f4f4f;
  border-top: 1px solid #484848;
`;

const FxLabel = styled.span`
  font: italic 13px "Liberation Serif", serif;
  color: #999;
`;

const BottomEdge = styled.div`
  height: 4px;
  flex: none;
  background: #2f2f2f;
`;

const ArrowMark = styled.svg`
  position: absolute;
  left: 35px;
  top: 120px;
`;

const Watermark = styled.div`
  position: absolute;
  left: 1026px;
  top: 848px;
  width: 245px;
  height: 112px;
  color: #cfcfcf;
`;

const BaiText = styled.span`
  position: absolute;
  left: 0;
  top: 21px;
  font: 700 56px/60px "Liberation Sans", sans-serif;
  -webkit-text-stroke: 1px #cfcfcf;
  transform: scaleX(0.86);
  transform-origin: left;
`;

const PawMark = styled.svg`
  position: absolute;
  left: 84px;
  top: 0;
`;

const JingText = styled.span`
  position: absolute;
  left: 154px;
  top: 23px;
  font: 700 40px/56px "Noto Sans CJK SC", sans-serif;
  white-space: nowrap;
`;

const DomainText = styled.span`
  position: absolute;
  left: 0;
  top: 77px;
  font: 400 28px/36px "Open Sans", sans-serif;
  white-space: nowrap;
`;

export default App;
